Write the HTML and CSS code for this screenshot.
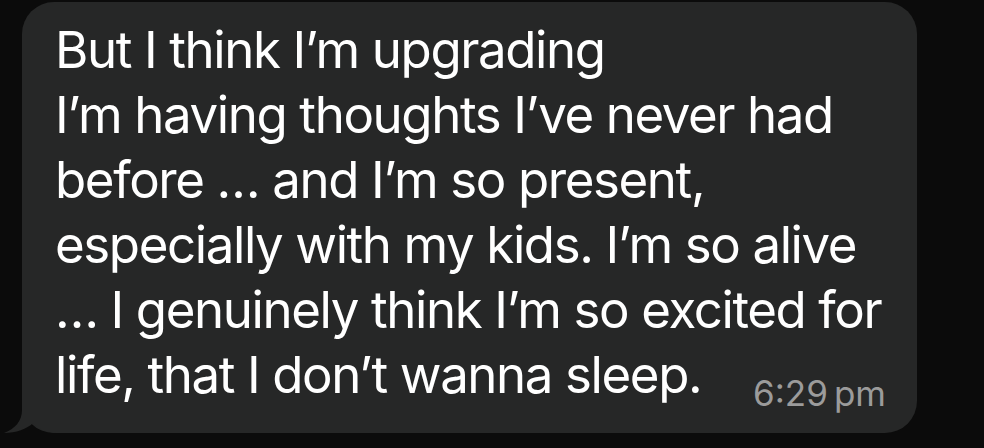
FILE: index.html
```html
<!DOCTYPE html>
<html>
<head>
<meta charset="utf-8">
<link rel="stylesheet" href="styles.css">
</head>
<body>
<div class="bubble">
  <svg class="tail" width="60" height="50" viewBox="0 0 60 50">
    <path d="M22 0 L22 27 C22 38 15 46 4 50 C16 50 27 46 33 40 C38 46 45 49 56 50 L60 50 L60 0 Z" fill="#262727"/>
  </svg>
  <div class="line">But I think I’m upgrading</div>
  <div class="line">I’m having thoughts I’ve never had</div>
  <div class="line">before … and I’m so present,</div>
  <div class="line">especially with my kids. I’m so alive</div>
  <div class="line">… I genuinely think I’m so excited for</div>
  <div class="line last"><span>life, that I don’t wanna sleep.</span><span class="time">6:29<span class="ampm">pm</span></span></div>
</div>
</body>
</html>
```
FILE: styles.css
```css
html, body {
  margin: 0;
  padding: 0;
  background: #0b0b0b;
  width: 984px;
  height: 448px;
  overflow: hidden;
}
.bubble {
  position: relative;
  margin: 2px 0 0 22px;
  width: 895px;
  height: 431px;
  box-sizing: border-box;
  background: #262727;
  border-radius: 32px;
  padding: 15px 31px 0 33px;
  font-family: Inter, "Noto Sans", sans-serif;
  font-size: 51px;
  line-height: 65px;
  color: #ffffff;
  letter-spacing: -1.4px;
}
.line {
  position: relative;
  white-space: nowrap;
}
.last {
  display: flex;
  justify-content: space-between;
  align-items: baseline;
}
.time {
  font-size: 35px;
  color: #9b9b9b;
  letter-spacing: 0;
  position: relative;
  top: 13px;
}
.ampm {
  margin-left: 6px;
}
.tail {
  position: absolute;
  left: -22px;
  bottom: 0;
}
```
